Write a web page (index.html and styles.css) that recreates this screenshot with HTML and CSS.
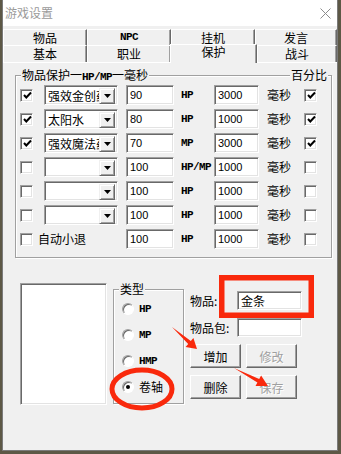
FILE: index.html
```html
<!DOCTYPE html>
<html lang="zh-CN">
<head>
    <meta charset="UTF-8">
    <meta name="viewport" content="width=device-width, initial-scale=1.0">
    <title>游戏设置</title>
    <link rel="stylesheet" href="styles.css">
</head>
<body>
    <div class="window">
        <div class="titlebar">
            <span class="title">游戏设置</span>
            <svg class="close" width="11" height="11" viewBox="0 0 11 11">
                <path d="M0.5 0.5 L10.5 10.5 M10.5 0.5 L0.5 10.5" stroke="#8c8c8c" stroke-width="1" fill="none"/>
            </svg>
        </div>

        <div class="tabs">
            <div class="tab-row back">
                <div class="tab">物品</div>
                <div class="tab"><span class="latin">NPC</span></div>
                <div class="tab">挂机</div>
                <div class="tab">发言</div>
            </div>
            <div class="tab-row front">
                <div class="tab">基本</div>
                <div class="tab">职业</div>
                <div class="tab active">保护</div>
                <div class="tab">战斗</div>
            </div>
        </div>

        <div class="page">
            <div class="group protect">
                <span class="group-title">物品保护一<span class="latin">HP/MP</span>一毫秒</span>
                <span class="group-title right">百分比</span>

                <div class="row">
                    <span class="chk on"><svg width="9" height="9" viewBox="0 0 9 9"><polyline points="1,4 3.3,6.5 8,1.5" fill="none" stroke="#000" stroke-width="2"/></svg></span>
                    <span class="combo"><span class="combo-text">强效金创药</span><span class="drop"><svg width="7" height="4" viewBox="0 0 7 4"><polygon points="0,0 7,0 3.5,4" fill="#000"/></svg></span></span>
                    <span class="edit num">90</span>
                    <span class="unit latin">HP</span>
                    <span class="edit num ms-val">3000</span>
                    <span class="ms">毫秒</span>
                    <span class="chk on"><svg width="9" height="9" viewBox="0 0 9 9"><polyline points="1,4 3.3,6.5 8,1.5" fill="none" stroke="#000" stroke-width="2"/></svg></span>
                </div>
                <div class="row">
                    <span class="chk on"><svg width="9" height="9" viewBox="0 0 9 9"><polyline points="1,4 3.3,6.5 8,1.5" fill="none" stroke="#000" stroke-width="2"/></svg></span>
                    <span class="combo"><span class="combo-text">太阳水</span><span class="drop"><svg width="7" height="4" viewBox="0 0 7 4"><polygon points="0,0 7,0 3.5,4" fill="#000"/></svg></span></span>
                    <span class="edit num">80</span>
                    <span class="unit latin">HP</span>
                    <span class="edit num ms-val">1000</span>
                    <span class="ms">毫秒</span>
                    <span class="chk on"><svg width="9" height="9" viewBox="0 0 9 9"><polyline points="1,4 3.3,6.5 8,1.5" fill="none" stroke="#000" stroke-width="2"/></svg></span>
                </div>
                <div class="row">
                    <span class="chk on"><svg width="9" height="9" viewBox="0 0 9 9"><polyline points="1,4 3.3,6.5 8,1.5" fill="none" stroke="#000" stroke-width="2"/></svg></span>
                    <span class="combo"><span class="combo-text">强效魔法药</span><span class="drop"><svg width="7" height="4" viewBox="0 0 7 4"><polygon points="0,0 7,0 3.5,4" fill="#000"/></svg></span></span>
                    <span class="edit num">70</span>
                    <span class="unit latin">MP</span>
                    <span class="edit num ms-val">3000</span>
                    <span class="ms">毫秒</span>
                    <span class="chk on"><svg width="9" height="9" viewBox="0 0 9 9"><polyline points="1,4 3.3,6.5 8,1.5" fill="none" stroke="#000" stroke-width="2"/></svg></span>
                </div>
                <div class="row">
                    <span class="chk"></span>
                    <span class="combo"><span class="combo-text"></span><span class="drop"><svg width="7" height="4" viewBox="0 0 7 4"><polygon points="0,0 7,0 3.5,4" fill="#000"/></svg></span></span>
                    <span class="edit num">100</span>
                    <span class="unit latin">HP/MP</span>
                    <span class="edit num ms-val">1000</span>
                    <span class="ms">毫秒</span>
                    <span class="chk"></span>
                </div>
                <div class="row">
                    <span class="chk"></span>
                    <span class="combo"><span class="combo-text"></span><span class="drop"><svg width="7" height="4" viewBox="0 0 7 4"><polygon points="0,0 7,0 3.5,4" fill="#000"/></svg></span></span>
                    <span class="edit num">100</span>
                    <span class="unit latin">HP</span>
                    <span class="edit num ms-val">1000</span>
                    <span class="ms">毫秒</span>
                    <span class="chk"></span>
                </div>
                <div class="row">
                    <span class="chk"></span>
                    <span class="combo"><span class="combo-text"></span><span class="drop"><svg width="7" height="4" viewBox="0 0 7 4"><polygon points="0,0 7,0 3.5,4" fill="#000"/></svg></span></span>
                    <span class="edit num">100</span>
                    <span class="unit latin">HP</span>
                    <span class="edit num ms-val">1000</span>
                    <span class="ms">毫秒</span>
                    <span class="chk"></span>
                </div>
                <div class="row">
                    <span class="chk"></span>
                    <span class="auto">自动小退</span>
                    <span class="edit num">100</span>
                    <span class="unit latin">HP</span>
                    <span class="edit num ms-val">1000</span>
                    <span class="ms">毫秒</span>
                    <span class="chk"></span>
                </div>
            </div>

            <div class="bottom">
                <div class="listbox"></div>

                <div class="group types">
                    <span class="group-title">类型</span>
                    <div class="radio-row"><span class="radio"></span><span class="latin">HP</span></div>
                    <div class="radio-row"><span class="radio"></span><span class="latin">MP</span></div>
                    <div class="radio-row"><span class="radio"></span><span class="latin">HMP</span></div>
                    <div class="radio-row"><span class="radio on"></span><span>卷轴</span></div>
                </div>

                <div class="item-form">
                    <div class="field">
                        <span class="field-label">物品:</span>
                        <span class="edit wide">金条</span>
                    </div>
                    <div class="field">
                        <span class="field-label">物品包:</span>
                        <span class="edit wide"></span>
                    </div>
                    <div class="buttons">
                        <button class="btn">增加</button>
                        <button class="btn" disabled>修改</button>
                        <button class="btn">删除</button>
                        <button class="btn" disabled>保存</button>
                    </div>
                </div>
            </div>
        </div>
    </div>

    <!-- red annotations drawn over the dialog -->
    <svg class="marks" width="341" height="454" viewBox="0 0 341 454">
        <rect x="221.75" y="277.75" width="89.5" height="37.5" fill="none" stroke="#f9290c" stroke-width="5.5"/>
        <ellipse cx="142" cy="389" rx="30" ry="19" fill="none" stroke="#f9290c" stroke-width="5"/>
        <polygon points="172,327 190.8,340.9 193.4,337.9 197,349 185.6,346.9 188.2,343.9" fill="#f9290c"/>
        <polygon points="234,368 259.2,379 261.1,375.5 268,386 255.5,386.1 257.4,382.6" fill="#f9290c"/>
    </svg>
</body>
</html>
```

FILE: styles.css
```css
body {
    margin: 0;
    background-color: #5d5846;
    font-family: "Noto Sans CJK SC", sans-serif;
    font-size: 12px;
    color: #000;
    overflow: hidden;
}

.latin {
    font-family: "Liberation Mono", monospace;
    font-size: 11px;
    font-weight: bold;
    letter-spacing: -0.6px;
}

.window {
    margin-left: 2px;
    width: 334px;
    height: 450px;
    border: 1px solid #7a7a7a;
    border-top: none;
    background-color: #f0f0f0;
}

.titlebar {
    height: 26px;
    background-color: #fff;
    display: flex;
    align-items: center;
    padding-left: 2px;
}

.title {
    color: #9a9a9a;
    line-height: 1;
}

.close {
    margin-left: auto;
    margin-right: 6px;
}

/* tab control */
.tabs {
    margin-top: 3px;
}

.tab-row {
    display: flex;
    align-items: flex-start;
}

.tab {
    box-sizing: border-box;
    width: 84px;
    height: 16px;
    border-top: 1px solid #fff;
    border-left: 1px solid #fff;
    border-right: 1px solid #696969;
    box-shadow: inset -1px 0 0 #a0a0a0;
    background-color: #f0f0f0;
    display: flex;
    align-items: center;
    justify-content: center;
    line-height: 1;
}

.tab:last-child {
    width: auto;
    flex: 1;
}

.front .tab {
    height: 17px;
}

.front .tab.active {
    width: 87px;
    height: 19px;
    margin: -1px 0 -1px -1px;
    padding-top: 1px;
    align-items: flex-start;
    z-index: 1;
}

.page {
    border-top: 1px solid #fff;
    padding-left: 12px;
}

/* group boxes */
.group {
    position: relative;
    box-sizing: border-box;
    border: 1px solid #a0a0a0;
    box-shadow: inset 1px 1px 0 #fff, 1px 1px 0 #fff;
}

.group-title {
    position: absolute;
    top: -8px;
    left: 5px;
    padding: 0 1px;
    line-height: 14px;
    background-color: #f0f0f0;
}

.group-title.right {
    left: auto;
    right: 3px;
}

.protect {
    width: 317px;
    height: 183px;
    margin-top: 12px;
    padding: 7px 0 0 4px;
}

.row {
    display: flex;
    align-items: center;
    height: 24px;
}

/* sunken controls */
.chk,
.edit,
.combo,
.listbox {
    box-sizing: border-box;
    background-color: #fff;
    border: 1px solid;
    border-color: #a0a0a0 #fff #fff #a0a0a0;
    box-shadow: inset 1px 1px 0 #696969, inset -1px -1px 0 #e3e3e3;
}

.chk {
    width: 13px;
    height: 13px;
    display: flex;
    align-items: center;
    justify-content: center;
    padding-left: 1px;
}

.row > .chk:first-child {
    margin-right: 11px;
}

.combo {
    width: 74px;
    height: 20px;
    margin-right: 8px;
    display: flex;
    padding: 2px 2px 1px 2px;
}

.combo-text {
    flex: 1;
    overflow: hidden;
    white-space: nowrap;
    line-height: 16px;
    padding-left: 1px;
}

.drop {
    box-sizing: border-box;
    width: 16px;
    height: 16px;
    border: 1px solid;
    border-color: #f0f0f0 #696969 #696969 #f0f0f0;
    box-shadow: inset 1px 1px 0 #fff, inset -1px -1px 0 #a0a0a0;
    background-color: #f0f0f0;
    display: flex;
    align-items: center;
    justify-content: center;
}

.edit {
    height: 20px;
    padding: 0 3px;
    line-height: 18px;
    white-space: nowrap;
}

.num {
    width: 48px;
    margin-right: 7px;
    font-family: "Liberation Sans", sans-serif;
    font-size: 11px;
}

.unit {
    width: 33px;
    white-space: nowrap;
}

.num.ms-val {
    width: 45px;
    margin-right: 8px;
}

.ms {
    width: 24px;
    margin-right: 13px;
    line-height: 1;
}

.auto {
    width: 88px;
    margin-left: -6px;
    line-height: 1;
}

/* lower part */
.bottom {
    display: flex;
    align-items: flex-start;
    margin-top: 25px;
    padding-left: 5px;
}

.listbox {
    width: 87px;
    height: 122px;
}

.types {
    width: 71px;
    height: 115px;
    margin: 6px 0 0 6px;
    padding: 6px 0 0 8px;
}

.radio-row {
    display: flex;
    align-items: center;
    gap: 5px;
    height: 26px;
    line-height: 1;
}

.radio {
    box-sizing: border-box;
    width: 12px;
    height: 12px;
    border-radius: 50%;
    border: 1px solid;
    border-color: #a0a0a0 #fff #fff #a0a0a0;
    box-shadow: inset 1px 1px 0 #696969;
    background-color: #fff;
    display: flex;
    align-items: center;
    justify-content: center;
}

.radio.on::after {
    content: "";
    width: 4px;
    height: 4px;
    border-radius: 50%;
    background-color: #000;
}

.item-form {
    margin: 8px 0 0 6px;
}

.field {
    display: flex;
    align-items: center;
    height: 19px;
    margin-bottom: 8px;
}

.field-label {
    width: 47px;
    line-height: 1;
}

.edit.wide {
    width: 65px;
    height: 19px;
    line-height: 17px;
}

.buttons {
    display: grid;
    grid-template-columns: 51px 51px;
    column-gap: 5px;
    row-gap: 7px;
    margin-top: -1px;
}

.btn {
    box-sizing: border-box;
    width: 51px;
    height: 24px;
    padding: 0;
    border: 1px solid;
    border-color: #fff #696969 #696969 #fff;
    box-shadow: inset -1px -1px 0 #a0a0a0;
    background-color: #f0f0f0;
    font: inherit;
    color: #000;
}

.btn:disabled {
    color: #a0a0a0;
    text-shadow: 1px 1px 0 #fff;
}

.marks {
    position: absolute;
    top: 0;
    left: 0;
    pointer-events: none;
}
```
